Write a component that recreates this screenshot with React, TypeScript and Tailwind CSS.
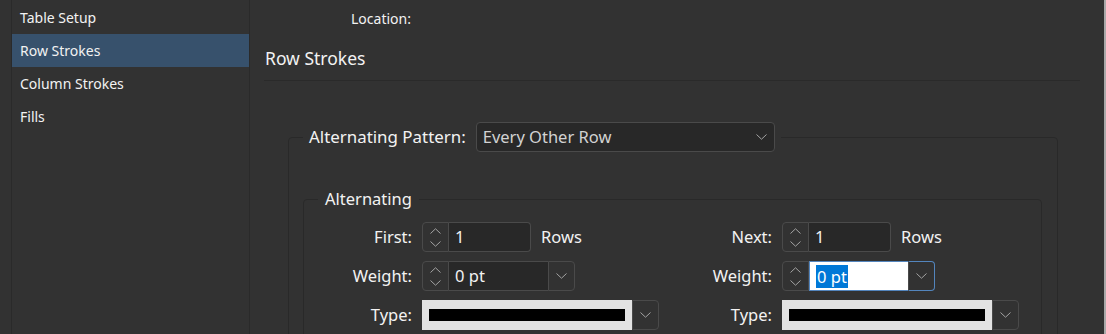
import React from "react";

const ITEMS = ["Table Setup", "Row Strokes", "Column Strokes", "Fills"];

function Chevron({ up = false }: { up?: boolean }) {
  return (
    <svg width="11" height="6" viewBox="0 0 11 6" className="block">
      <path
        d={up ? "M0.5 5.5 L5.5 0.8 L10.5 5.5" : "M0.5 0.5 L5.5 5.2 L10.5 0.5"}
        fill="none"
        stroke="#a3a3a3"
        strokeWidth="1"
      />
    </svg>
  );
}

function Spinner() {
  return (
    <div className="w-[27px] h-[30px] shrink-0 border border-[#4a4a4a] rounded-l-[4px] flex flex-col items-center justify-center gap-[7px]">
      <Chevron up />
      <Chevron />
    </div>
  );
}

function DropBtn({ focus = false }: { focus?: boolean }) {
  return (
    <div
      className={`w-[27px] h-[30px] shrink-0 flex items-center justify-center rounded-r-[4px] border ${
        focus ? "border-[#5385bd] border-l-[#4a4a4a]" : "border-[#4a4a4a]"
      } bg-[#323232]`}
    >
      <Chevron />
    </div>
  );
}

function CountRow({ label }: { label: string }) {
  return (
    <div className="flex items-center h-[30px]">
      <span className="w-[118px] text-right pr-[10px]">{label}</span>
      <Spinner />
      <div className="w-[82px] h-[30px] bg-[#282828] border border-l-0 border-[#4a4a4a] rounded-r-[4px] flex items-center pl-[6px]">
        1
      </div>
      <span className="ml-[10px]">Rows</span>
    </div>
  );
}

function WeightRow({ focus = false }: { focus?: boolean }) {
  return (
    <div className="flex items-center h-[30px]">
      <span className="w-[118px] text-right pr-[10px]">Weight:</span>
      <Spinner />
      {focus ? (
        <div className="flex">
          <div className="w-[99px] h-[30px] bg-white border border-r-0 border-[#5385bd] flex items-center pl-[6px]">
            <span className="bg-[#0078d7] text-white leading-[23px] px-px">0 pt</span>
          </div>
          <DropBtn focus />
        </div>
      ) : (
        <div className="flex">
          <div className="w-[99px] h-[30px] bg-[#282828] border border-l-0 border-r-0 border-[#4a4a4a] flex items-center pl-[6px]">
            0 pt
          </div>
          <DropBtn />
        </div>
      )}
    </div>
  );
}

function TypeRow() {
  return (
    <div className="flex items-center h-[30px]">
      <span className="w-[118px] text-right pr-[10px]">Type:</span>
      <div className="w-[210px] h-[30px] bg-[#e2e2e2] flex items-center px-[7px]">
        <div className="w-full h-[12px] bg-black" />
      </div>
      <DropBtn />
    </div>
  );
}

export default function App() {
  return (
    <div className="w-[1106px] h-[334px] overflow-hidden bg-[#323232] text-[#f2f2f2] flex font-['Noto_Sans',sans-serif]">
      <aside className="w-[250px] shrink-0 pl-[11px]">
        <ul className="h-full border-x border-[#2a2a2a] text-[14px] pt-px">
          {ITEMS.map((it) => (
            <li
              key={it}
              className={`h-[33px] flex items-center pl-[8px] ${it === "Row Strokes" ? "bg-[#37516c]" : ""}`}
            >
              {it}
            </li>
          ))}
        </ul>
      </aside>

      <main className="flex-1 pl-[14px] pr-[24px] text-[16.5px]">
        <div className="h-[36px] flex items-center pl-[87px] text-[14px]">Location:</div>
        <h2 className="h-[44px] flex items-center pl-px text-[17.5px]">Row Strokes</h2>
        <div className="h-px bg-[#2a2a2a]" />

        <fieldset className="mt-[41px] ml-[24px] mr-[22px] border border-[#292929] rounded-[4px] pl-[14px] pr-[15px] pt-[36px]">
          <legend className="px-[6px] flex items-center">
            <span className="mr-[10px] text-[16.9px]">Alternating Pattern:</span>
            <div className="w-[299px] h-[30px] bg-[#282828] border border-[#4a4a4a] rounded-[4px] flex items-center justify-between pl-[6px] pr-[7px] text-[#d2d2d2]">
              <span>Every Other Row</span>
              <Chevron />
            </div>
          </legend>

          <fieldset className="border border-[#292929] rounded-[4px] pt-[12px] pb-[20px]">
            <legend className="ml-[14px] px-[7px] h-[22px] leading-[22px]">Alternating</legend>
            <div className="grid grid-cols-[360px_360px]">
              <div className="flex flex-col gap-[9px]">
                <CountRow label="First:" />
                <WeightRow />
                <TypeRow />
              </div>
              <div className="flex flex-col gap-[9px]">
                <CountRow label="Next:" />
                <WeightRow focus />
                <TypeRow />
              </div>
            </div>
          </fieldset>
        </fieldset>
      </main>
      <div className="w-[2px] shrink-0 bg-[#a9a9a9]" />
    </div>
  );
}
